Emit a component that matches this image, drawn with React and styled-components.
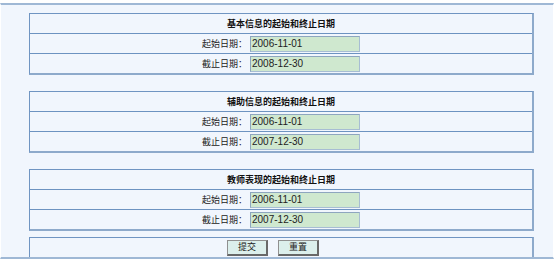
import React from "react";
import styled, { createGlobalStyle } from "styled-components";

const Global = createGlobalStyle`
  html, body { margin: 0; padding: 0; background: #ffffff; }
  body { font-family: "Noto Sans CJK SC", "Liberation Sans", sans-serif; }
`;

const Panel = styled.div`
  margin-top: 3px;
  width: 554px;
  box-sizing: border-box;
  background: #f1f6fd;
  border-top: 2px solid #9fb8d5;
  border-bottom: 2px solid #9fb8d5;
  border-left: 1px solid #ffffff;
  border-right: 1px solid #ffffff;
  padding: 8px 19px 0 28px;
  display: flex;
  flex-direction: column;
`;

const Box = styled.div`
  border-top: 1px solid #7095c2;
  border-left: 1px solid #7095c2;
  border-right: 2px solid #8eaacb;
  border-bottom: ${(p) => (p.$last ? "0" : "2px solid #8eaacb")};
  margin-bottom: ${(p) => p.$gap || 0}px;
  display: flex;
  flex-direction: column;
`;

const HeaderRow = styled.div`
  height: 19px;
  display: flex;
  align-items: center;
  justify-content: center;
  font-size: 9px;
  font-weight: bold;
  color: #111;
`;

const Row = styled.div`
  height: 19px;
  border-top: 1px solid #6d93c1;
  display: grid;
  grid-template-columns: 220px 110px;
  align-items: center;
`;

const Label = styled.div`
  text-align: right;
  padding-right: 3px;
  font-size: 9px;
  color: #222;
`;

const DateInput = styled.div`
  box-sizing: border-box;
  width: 110px;
  height: 16px;
  background: #cfe8cf;
  border: 1px solid #a7bdd3;
  border-top-color: #8ea6bf;
  border-left-color: #8ea6bf;
  font-family: "Liberation Sans", Arial, sans-serif;
  font-size: 10px;
  line-height: 14px;
  padding-left: 1px;
  color: #222;
`;

const ButtonRow = styled.div`
  height: 19px;
  display: flex;
  align-items: center;
  justify-content: center;
  gap: 10px;
  padding-right: 16px;
`;

const Button = styled.button`
  box-sizing: border-box;
  width: 41px;
  height: 16px;
  padding: 0;
  margin: 0;
  background: #dcefec;
  border: 1px solid #909090;
  border-right: 2px solid #686868;
  border-bottom: 2px solid #686868;
  font-family: "Noto Sans CJK SC", sans-serif;
  font-size: 9px;
  color: #222;
  line-height: 12px;
`;

const sections = [
  { title: "基本信息的起始和终止日期", start: "2006-11-01", end: "2008-12-30", gap: 16 },
  { title: "辅助信息的起始和终止日期", start: "2006-11-01", end: "2007-12-30", gap: 16 },
  { title: "教师表现的起始和终止日期", start: "2006-11-01", end: "2007-12-30", gap: 6 },
];

export default function App() {
  return (
    <>
      <Global />
      <Panel>
        {sections.map((s) => (
          <Box key={s.title} $gap={s.gap}>
            <HeaderRow>{s.title}</HeaderRow>
            <Row>
              <Label>起始日期：</Label>
              <DateInput>{s.start}</DateInput>
            </Row>
            <Row>
              <Label>截止日期：</Label>
              <DateInput>{s.end}</DateInput>
            </Row>
          </Box>
        ))}
        <Box $last>
          <ButtonRow>
            <Button>提交</Button>
            <Button>重置</Button>
          </ButtonRow>
        </Box>
      </Panel>
    </>
  );
}
